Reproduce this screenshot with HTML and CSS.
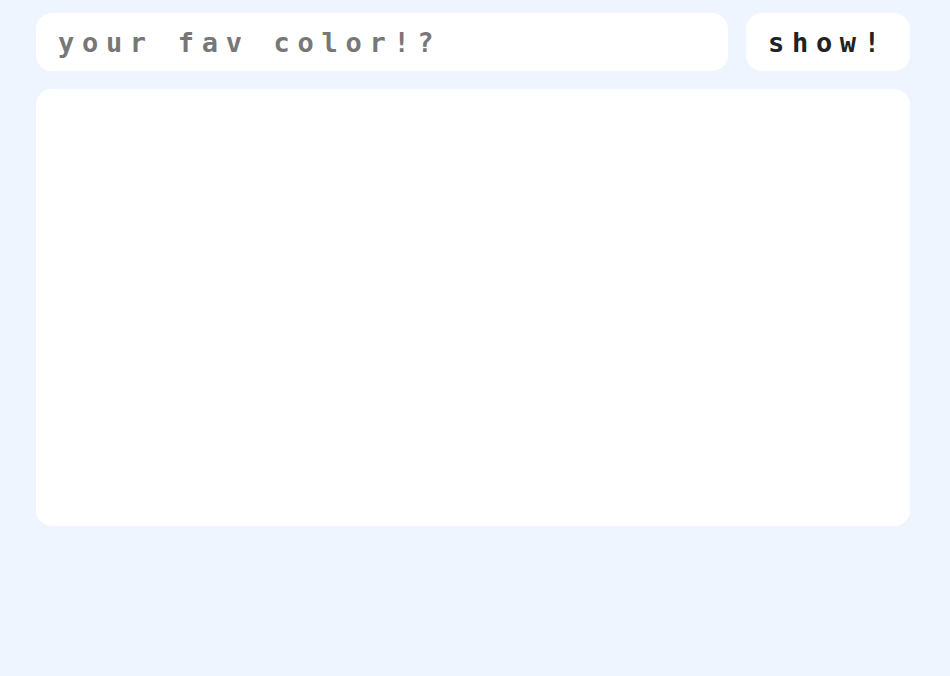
FILE: index.html
```html
<!DOCTYPE html>
<html>
<head>
<meta charset="utf-8">
<link rel="stylesheet" href="styles.css">
</head>
<body>
<main class="app">
  <form class="bar">
    <input class="field" type="text" placeholder="your fav color!?">
    <button class="show" type="button">show!</button>
  </form>
  <section class="canvas"></section>
</main>
</body>
</html>
```
FILE: styles.css
```css
html, body {
  margin: 0;
  padding: 0;
  background: #eef5ff;
}
.app {
  width: 874px;
  margin-left: 36px;
  padding-top: 13px;
  display: flex;
  flex-direction: column;
  gap: 18px;
}
.bar {
  display: flex;
  gap: 18px;
  margin: 0;
}
.field, .show {
  height: 58px;
  border: none;
  border-radius: 16px;
  background: #fff;
  font-family: "DejaVu Sans Mono", monospace;
  font-weight: bold;
  font-size: 27px;
  letter-spacing: 7.7px;
  outline: none;
  box-sizing: border-box;
}
.field {
  flex: 1;
  padding: 0 22px;
  color: #222;
}
.field::placeholder {
  color: #777;
}
.show {
  width: 164px;
  padding: 0 0 0 22px;
  text-align: left;
  color: #222;
}
.canvas {
  height: 437px;
  background: #fff;
  border-radius: 16px;
}
```
